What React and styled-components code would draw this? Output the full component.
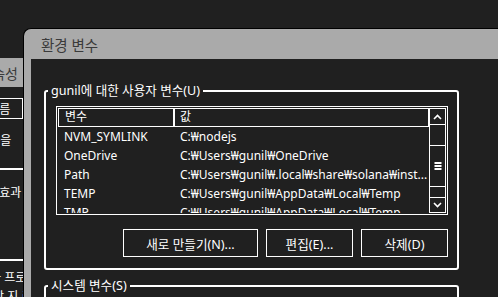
import React from 'react';
import styled, { createGlobalStyle } from 'styled-components';

const GlobalStyle = createGlobalStyle`
  html, body {
    margin: 0;
    padding: 0;
    background: #202020;
    overflow: hidden;
  }
  body {
    font-family: "Noto Sans", "Noto Sans CJK KR", sans-serif;
    color: #ffffff;
  }
  #root {
    width: 498px;
    height: 297px;
    overflow: hidden;
  }
`;

const Screen = styled.div`
  display: flex;
  align-items: flex-start;
  height: 297px;
  overflow: hidden;
`;

/* the System Properties window peeking out on the left */
const BackWindow = styled.div`
  flex: none;
  width: 23px;
  height: 239px;
  margin-top: 58px;
  display: flex;
  flex-direction: column;
  overflow: hidden;
  font-size: 12px;
`;

const BackTitle = styled.div`
  flex: none;
  height: 29px;
  display: flex;
  align-items: center;
  justify-content: flex-end;
  padding-right: 5px;
  background: #aaaaaa;
  color: #3a3a3a;
  font-size: 14px;
  white-space: nowrap;
`;

const BackTab = styled.div`
  flex: none;
  height: 21px;
  margin-top: 11px;
  box-sizing: border-box;
  border: 1px solid #ffffff;
  border-left: none;
  display: flex;
  align-items: center;
  white-space: nowrap;
  overflow: hidden;
`;

const BackLine = styled.div`
  flex: none;
  height: 16px;
  line-height: 16px;
  margin-top: ${(p) => p.gap}px;
  white-space: nowrap;
`;

const Clipped = styled.span`
  display: inline-block;
  margin-left: ${(p) => p.shift}px;
`;

const BackRule = styled.div`
  flex: none;
  height: 2px;
  margin-top: ${(p) => p.gap}px;
  background: #ffffff;
`;

/* the Environment Variables dialog */
const Dialog = styled.div`
  flex: 1;
  height: 269px;
  margin-top: 28px;
  border-top: 1px solid #000000;
  border-left: 1px solid #000000;
  border-top-left-radius: 8px;
  background: #aaaaaa;
  padding-left: 7px;
  display: flex;
  flex-direction: column;
  overflow: hidden;
`;

const TitleBar = styled.div`
  flex: none;
  height: 30px;
  display: flex;
  align-items: center;
  padding-left: 10px;
  color: #3a3a3a;
  font-size: 14.5px;
`;

const Body = styled.div`
  flex: 1;
  background: #202020;
  padding: 24px 0 0 13px;
`;

const GroupBox = styled.fieldset`
  width: 415px;
  box-sizing: border-box;
  min-width: 0;
  margin: ${(p) => p.top || 0}px 0 0 0;
  padding: 0;
  border: 2px solid #ffffff;
  border-radius: 3px;
  min-height: ${(p) => p.minHeight || 0}px;
`;

const Legend = styled.legend`
  margin-left: 2px;
  padding: 0 3px;
  font-size: 12.6px;
  line-height: 16px;
  color: #ffffff;
  white-space: nowrap;
`;

const GroupInner = styled.div`
  padding: 7px 9px 11px 10px;
`;

const ListView = styled.div`
  height: 109px;
  box-sizing: border-box;
  border: 1px solid #ffffff;
  padding: 1px;
  display: flex;
`;

const Table = styled.div`
  flex: 1;
  min-width: 0;
  overflow: hidden;
  display: flex;
  flex-direction: column;
  font-size: 12px;
`;

const HeaderRow = styled.div`
  flex: none;
  display: flex;
  height: 19px;
`;

const HeaderCell = styled.div`
  box-sizing: border-box;
  width: ${(p) => (p.w ? `${p.w}px` : 'auto')};
  flex: ${(p) => (p.w ? 'none' : '1')};
  border: 1px solid #ffffff;
  padding-left: ${(p) => p.pad}px;
  line-height: 16px;
`;

const Row = styled.div`
  flex: none;
  display: flex;
  height: 19px;
  line-height: 19px;
  white-space: nowrap;
`;

const Cell = styled.div`
  box-sizing: border-box;
  width: ${(p) => (p.w ? `${p.w}px` : 'auto')};
  flex: ${(p) => (p.w ? 'none' : '1')};
  min-width: 0;
  overflow: hidden;
  padding-left: ${(p) => p.pad}px;
`;

const ScrollBar = styled.div`
  flex: none;
  width: 17px;
  box-sizing: border-box;
  border: 1px solid #ffffff;
  display: flex;
  flex-direction: column;
`;

const ScrollPart = styled.div`
  flex: none;
  box-sizing: border-box;
  height: ${(p) => p.h}px;
  border-top: ${(p) => (p.top ? '1px solid #ffffff' : 'none')};
  border-bottom: ${(p) => (p.bottom ? '1px solid #ffffff' : 'none')};
  display: flex;
  align-items: center;
  justify-content: center;
`;

const ButtonRow = styled.div`
  display: flex;
  justify-content: flex-end;
  gap: 8px;
  margin-top: 14px;
`;

const Button = styled.button`
  width: ${(p) => p.w}px;
  height: 28px;
  box-sizing: border-box;
  background: #202020;
  border: 1px solid #ffffff;
  border-radius: 0;
  color: #ffffff;
  font-family: "Noto Sans", "Noto Sans CJK KR", sans-serif;
  font-size: 12.6px;
  padding: 0;
`;

const Chevron = ({ down }) => (
  <svg width="9" height="6" viewBox="0 0 9 6">
    <polyline
      points={down ? '1,1 4.5,4.5 8,1' : '1,5 4.5,1.5 8,5'}
      fill="none"
      stroke="#ffffff"
      strokeWidth="1.6"
    />
  </svg>
);

const Grip = () => (
  <svg width="8" height="8" viewBox="0 0 8 8">
    <rect x="0.5" y="0" width="7" height="2" fill="#ffffff" />
    <rect x="0.5" y="3" width="7" height="2" fill="#ffffff" />
    <rect x="0.5" y="6" width="7" height="2" fill="#ffffff" />
  </svg>
);

const userVars = [
  ['NVM_SYMLINK', 'C:₩nodejs'],
  ['OneDrive', 'C:₩Users₩gunil₩OneDrive'],
  ['Path', 'C:₩Users₩gunil₩.local₩share₩solana₩inst...'],
  ['TEMP', 'C:₩Users₩gunil₩AppData₩Local₩Temp'],
  ['TMP', 'C:₩Users₩gunil₩AppData₩Local₩Temp'],
];

export default function App() {
  return (
    <>
      <GlobalStyle />
      <Screen>
        <BackWindow>
          <BackTitle>시스템 속성</BackTitle>
          <BackTab>
            <Clipped shift={-48}>컴퓨터 이름</Clipped>
          </BackTab>
          <BackLine gap={14}>
            <Clipped shift={-69}>대부분의 내용을</Clipped>
          </BackLine>
          <BackRule gap={19} />
          <BackLine gap={15}>
            <Clipped shift={-26}>시각 효과</Clipped>
          </BackLine>
          <BackRule gap={58} />
          <BackLine gap={9}>
            <Clipped shift={-32}>사용자 프로필</Clipped>
          </BackLine>
          <BackLine gap={3}>
            <Clipped shift={-18}>시작 지 르</Clipped>
          </BackLine>
        </BackWindow>

        <Dialog>
          <TitleBar>환경 변수</TitleBar>
          <Body>
            <GroupBox>
              <Legend>gunil에 대한 사용자 변수(U)</Legend>
              <GroupInner>
                <ListView>
                  <Table>
                    <HeaderRow>
                      <HeaderCell w={116} pad={6}>변수</HeaderCell>
                      <HeaderCell pad={5}>값</HeaderCell>
                    </HeaderRow>
                    {userVars.map(([name, value]) => (
                      <Row key={name}>
                        <Cell w={116} pad={6}>{name}</Cell>
                        <Cell pad={6}>{value}</Cell>
                      </Row>
                    ))}
                  </Table>
                  <ScrollBar>
                    <ScrollPart h={16} bottom>
                      <Chevron />
                    </ScrollPart>
                    <ScrollPart h={20} />
                    <ScrollPart h={42} top bottom>
                      <Grip />
                    </ScrollPart>
                    <ScrollPart h={10} />
                    <ScrollPart h={15} top>
                      <Chevron down />
                    </ScrollPart>
                  </ScrollBar>
                </ListView>
                <ButtonRow>
                  <Button w={135}>새로 만들기(N)...</Button>
                  <Button w={87}>편집(E)...</Button>
                  <Button w={87}>삭제(D)</Button>
                </ButtonRow>
              </GroupInner>
            </GroupBox>
            <GroupBox top={8} minHeight={80}>
              <Legend>시스템 변수(S)</Legend>
            </GroupBox>
          </Body>
        </Dialog>
      </Screen>
    </>
  );
}
